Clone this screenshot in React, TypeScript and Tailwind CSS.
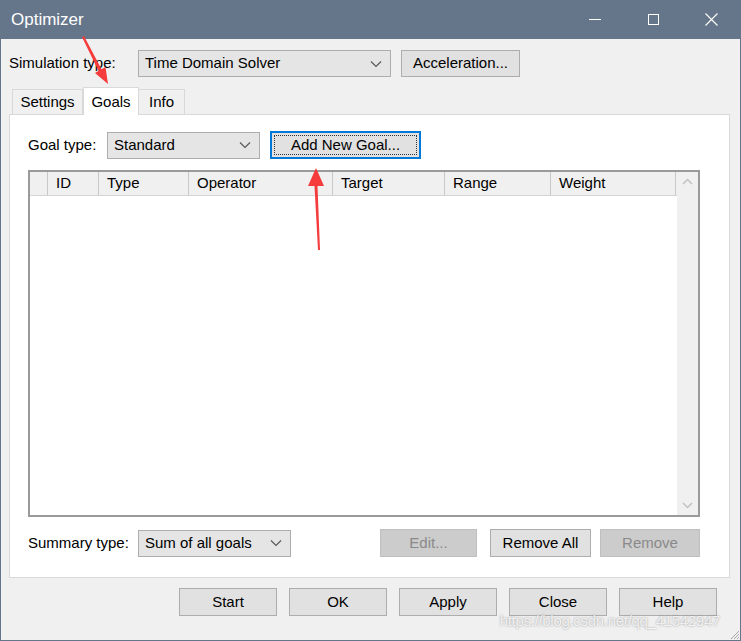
import React from 'react';

const FONT = { fontFamily: '"Liberation Sans", Arial, sans-serif' };

function Combo({ value, width }: { value: string; width: string }) {
    return (
        <div
            className={`flex h-[27px] items-center justify-between border border-[#adadad] bg-[#e5e5e5] pl-[6px] pr-[8px] ${width}`}
        >
            <span>{value}</span>
            <svg width="12" height="8" viewBox="0 0 12 8" className="text-[#555]">
                <path d="M1 1.5 L6 6.5 L11 1.5" fill="none" stroke="currentColor" strokeWidth="1.1" />
            </svg>
        </div>
    );
}

function Btn({
    label,
    width,
    disabled = false,
}: {
    label: string;
    width: string;
    disabled?: boolean;
}) {
    return (
        <div
            className={`flex h-[28px] items-center justify-center border ${width} ${
                disabled
                    ? 'border-[#bfbfbf] bg-[#cccccc] text-[#8a8a8a]'
                    : 'border-[#adadad] bg-[#e1e1e1] text-black'
            }`}
        >
            {label}
        </div>
    );
}

const columns = [
    { name: '', w: 'w-[18px]' },
    { name: 'ID', w: 'w-[51px]' },
    { name: 'Type', w: 'w-[90px]' },
    { name: 'Operator', w: 'w-[144px]' },
    { name: 'Target', w: 'w-[112px]' },
    { name: 'Range', w: 'w-[106px]' },
    { name: 'Weight', w: 'w-[125px]' },
];

export default function App() {
    return (
        <div
            className="relative h-[641px] w-[741px] overflow-hidden border-x border-b border-[#66768a] bg-[#f0f0f0] text-[15px] text-black"
            style={FONT}
        >
            {/* title bar */}
            <div className="flex h-[39px] items-center bg-[#66768a] pl-[10px] text-[17px] text-white">
                <span className="flex-1">Optimizer</span>
                <div className="flex h-full items-center">
                    <div className="flex h-full w-[58px] items-center justify-center">
                        <div className="h-px w-[12px] bg-white" />
                    </div>
                    <div className="flex h-full w-[58px] items-center justify-center">
                        <div className="h-[11px] w-[11px] border border-white" />
                    </div>
                    <div className="flex h-full w-[58px] items-center justify-center">
                        <svg width="13" height="13" viewBox="0 0 13 13">
                            <path d="M0.5 0.5 L12.5 12.5 M12.5 0.5 L0.5 12.5" stroke="white" strokeWidth="1.1" />
                        </svg>
                    </div>
                </div>
            </div>

            {/* simulation row */}
            <div className="mt-[11px] flex items-center pl-[8px]">
                <span className="w-[129px]">Simulation type:</span>
                <Combo value="Time Domain Solver" width="w-[253px]" />
                <div className="ml-[10px] flex h-[27px] w-[119px] items-center justify-center border border-[#adadad] bg-[#e1e1e1]">
                    Acceleration...
                </div>
            </div>

            {/* tabs */}
            <div className="mt-[10px] flex items-end pl-[11px]">
                <div className="flex h-[25px] w-[71px] items-center justify-center border border-b-0 border-[#d9d9d9] bg-[#f0f0f0]">
                    Settings
                </div>
                <div className="relative z-10 -mb-px flex h-[28px] w-[56px] items-start justify-center border border-b-0 border-[#d9d9d9] bg-white pt-[3px]">
                    Goals
                </div>
                <div className="flex h-[25px] w-[46px] items-center justify-center border border-b-0 border-l-0 border-[#d9d9d9] bg-[#f0f0f0]">
                    Info
                </div>
            </div>

            {/* tab panel */}
            <div className="ml-[8px] flex h-[464px] w-[721px] flex-col border border-[#d9d9d9] bg-white pl-[18px] pr-[29px]">
                <div className="mt-[16px] flex items-center">
                    <span className="w-[79px]">Goal type:</span>
                    <Combo value="Standard" width="w-[153px]" />
                    <div className="ml-[10px] flex h-[28px] w-[151px] items-center justify-center border-2 border-[#0078d7] bg-[#e1e1e1] p-[2px]">
                        <div className="flex h-full w-full items-center justify-center border border-dotted border-[#333]">
                            Add New Goal...
                        </div>
                    </div>
                </div>

                {/* goals table */}
                <div className="mt-[11px] flex h-[347px] border-2 border-[#9a9a9a] bg-white">
                    <div className="flex flex-1 flex-col">
                        <div className="flex h-[24px] border-b border-[#d5d5d5] bg-[#f0f0f0]">
                            {columns.map((c, i) => (
                                <div
                                    key={i}
                                    className={`flex items-center border-r border-[#c8c8c8] pl-[8px] ${c.w}`}
                                >
                                    {c.name}
                                </div>
                            ))}
                        </div>
                    </div>
                    <div className="flex w-[21px] flex-col items-center justify-between bg-[#f0f0f0] py-[6px]">
                        <svg width="11" height="7" viewBox="0 0 11 7">
                            <path d="M1 6 L5.5 1.5 L10 6" fill="none" stroke="#c2c2c2" strokeWidth="1.5" />
                        </svg>
                        <svg width="11" height="7" viewBox="0 0 11 7">
                            <path d="M1 1 L5.5 5.5 L10 1" fill="none" stroke="#c2c2c2" strokeWidth="1.5" />
                        </svg>
                    </div>
                </div>

                {/* summary row */}
                <div className="mt-[12px] flex items-center">
                    <span className="w-[110px]">Summary type:</span>
                    <Combo value="Sum of all goals" width="w-[153px]" />
                    <div className="ml-auto flex">
                        <Btn label="Edit..." width="w-[97px]" disabled />
                        <div className="ml-[13px]">
                            <Btn label="Remove All" width="w-[101px]" />
                        </div>
                        <div className="ml-[9px]">
                            <Btn label="Remove" width="w-[100px]" disabled />
                        </div>
                    </div>
                </div>
            </div>

            {/* bottom buttons */}
            <div className="mt-[10px] flex gap-[12px] pl-[178px]">
                {['Start', 'OK', 'Apply', 'Close', 'Help'].map((b) => (
                    <Btn key={b} label={b} width="w-[98px]" />
                ))}
            </div>

            {/* watermark */}
            <div
                className="absolute bottom-[8px] right-[20px] text-[15px] tracking-[-0.3px] text-white/80"
                style={{ textShadow: '0 0 2px rgba(120,120,120,0.8)' }}
            >
                https://blog.csdn.net/qq_41542947
            </div>

            {/* resize grip */}
            <svg className="absolute bottom-0 right-0" width="12" height="12" viewBox="0 0 12 12">
                <path d="M11 3 L3 11 M11 6 L6 11 M11 9 L9 11" stroke="#a8a8a8" strokeWidth="1" />
            </svg>

            {/* annotation arrows */}
            <svg className="pointer-events-none absolute left-0 top-0" width="741" height="641">
                <polygon points="81,37 83,36 100.5,69.3 104.5,67 107,84 94,73 97.5,71" fill="#f53b3b" />
                <polygon points="319,250 317,250 313.5,186 307,186 315,168 323,186 316.5,186" fill="#f53b3b" />
            </svg>
        </div>
    );
}
